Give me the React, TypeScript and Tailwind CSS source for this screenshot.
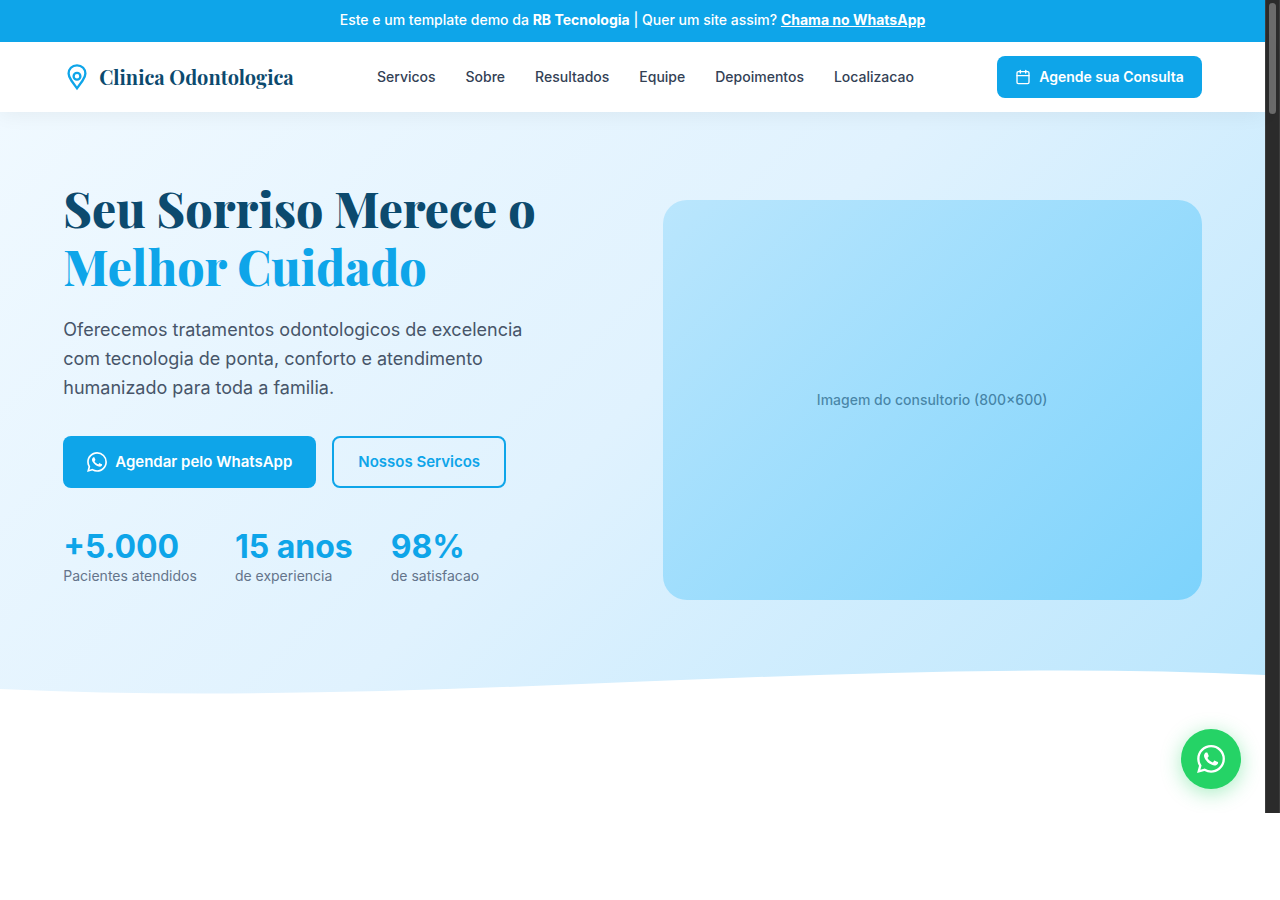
import React from "react";
import { SiWhatsapp } from "react-icons/si";
import { Calendar } from "lucide-react";

const navItems = [
  { label: "Servicos", href: "#servicos" },
  { label: "Sobre", href: "#sobre" },
  { label: "Resultados", href: "#resultados" },
  { label: "Equipe", href: "#equipe" },
  { label: "Depoimentos", href: "#depoimentos" },
  { label: "Localizacao", href: "#localizacao" },
];

const stats = [
  { value: "+5.000", label: "Pacientes atendidos" },
  { value: "15 anos", label: "de experiencia" },
  { value: "98%", label: "de satisfacao" },
];

function DemoBar() {
  return (
    <div className="relative z-20 bg-[#0ea5e9] px-4 pt-[10px] pb-3 text-center text-sm font-medium text-white">
      Este e um template demo da <strong className="font-bold">RB Tecnologia</strong> | Quer um site assim?{" "}
      <a href="#whatsapp" className="font-bold underline">
        Chama no WhatsApp
      </a>
    </div>
  );
}

function LogoMark() {
  return (
    <svg viewBox="0 0 24 24" className="size-7 text-[#0ea5e9]" fill="none" stroke="currentColor" strokeWidth="2" aria-hidden="true">
      <path d="M12 2C7.6 2 4.8 5.2 4.8 9c0 2.4 1.1 4.2 2.5 6.2L12 21.7l4.7-6.5c1.4-2 2.5-3.8 2.5-6.2C19.2 5.2 16.4 2 12 2z" />
      <circle cx="12" cy="11.3" r="2.9" />
    </svg>
  );
}

function Header() {
  return (
    <header className="relative z-10 bg-white shadow-[0_2px_20px_rgba(0,0,0,0.06)]">
      <div className="mx-auto flex h-[70px] w-[90%] max-w-[1200px] items-center justify-between">
        <a
          href="#inicio"
          className="flex items-center gap-2 font-['Playfair_Display','Liberation_Serif',serif] text-xl font-bold text-[#0c4a6e]"
        >
          <LogoMark />
          Clinica Odontologica
        </a>
        <nav className="flex gap-[30px] text-sm font-medium text-[#334155]">
          {navItems.map((item) => (
            <a key={item.href} href={item.href}>
              {item.label}
            </a>
          ))}
        </nav>
        <a
          href="#agendar"
          className="flex h-[42px] items-center gap-2 rounded-lg bg-[#0ea5e9] px-[18px] text-sm font-semibold text-white"
        >
          <Calendar className="size-4" aria-hidden="true" />
          Agende sua Consulta
        </a>
      </div>
    </header>
  );
}

function Hero() {
  return (
    <section className="relative bg-[linear-gradient(135deg,#f0f9ff_0%,#e0f2fe_50%,#bae6fd_100%)] pt-[67px] pb-[79px]">
      <div className="mx-auto grid w-[90%] max-w-[1200px] grid-cols-2 items-center gap-[60px]">
        <div className="pb-9">
          <h1 className="font-['Playfair_Display','Liberation_Serif',serif] text-5xl leading-[58px] font-extrabold text-[#0c4a6e]">
            Seu Sorriso Merece o <span className="block text-[#0ea5e9]">Melhor Cuidado</span>
          </h1>
          <p className="mt-5 max-w-[480px] text-lg leading-[29px] text-[#475569]">
            Oferecemos tratamentos odontologicos de excelencia com tecnologia de ponta, conforto e atendimento
            humanizado para toda a familia.
          </p>
          <div className="mt-[34px] flex gap-4 text-[15px] font-semibold">
            <a href="#whatsapp" className="flex h-[52px] items-center gap-2 rounded-lg bg-[#0ea5e9] px-6 text-white">
              <SiWhatsapp className="size-5" aria-hidden="true" />
              Agendar pelo WhatsApp
            </a>
            <a
              href="#servicos"
              className="flex h-[52px] items-center rounded-lg border-2 border-[#0ea5e9] px-6 text-[#0ea5e9]"
            >
              Nossos Servicos
            </a>
          </div>
          <dl className="mt-10 flex gap-[38px]">
            {stats.map((stat) => (
              <div key={stat.label} className="flex flex-col-reverse">
                <dt className="text-sm leading-[19px] text-[#64748b]">{stat.label}</dt>
                <dd className="text-[32px] leading-[38px] font-bold text-[#0ea5e9]">{stat.value}</dd>
              </div>
            ))}
          </dl>
        </div>
        <div className="flex h-[400px] items-center justify-center rounded-3xl bg-[linear-gradient(135deg,#bae6fd,#7dd3fc)] text-sm font-medium text-[#0c4a6e]/60">
          Imagem do consultorio (800×600)
        </div>
      </div>
      <svg
        viewBox="0 0 1440 80"
        preserveAspectRatio="none"
        className="absolute bottom-0 left-0 h-20 w-full"
        aria-hidden="true"
      >
        <path d="M0 69C480 89 960 35 1440 55V80H0Z" fill="#fff" />
      </svg>
    </section>
  );
}

export default function App() {
  return (
    <div className="bg-white font-['Inter','Liberation_Sans',sans-serif]">
      <div className="relative flex min-h-[813px]">
        <main className="min-w-0 flex-1">
          <DemoBar />
          <Header />
          <Hero />
        </main>
        <div className="w-[15px] shrink-0 border-x border-[#3d3d3d] bg-[#2b2b2b] px-[3px] pt-[3px]" aria-hidden="true">
          <div className="h-[111px] rounded-full bg-[#6b6b6b]" />
        </div>
        <a
          href="#whatsapp"
          aria-label="WhatsApp"
          className="absolute right-[39px] bottom-6 z-20 flex size-[60px] items-center justify-center rounded-full bg-[#25d366] text-white shadow-[0_4px_20px_rgba(37,211,102,0.4)]"
        >
          <SiWhatsapp className="size-7" aria-hidden="true" />
        </a>
      </div>
    </div>
  );
}
